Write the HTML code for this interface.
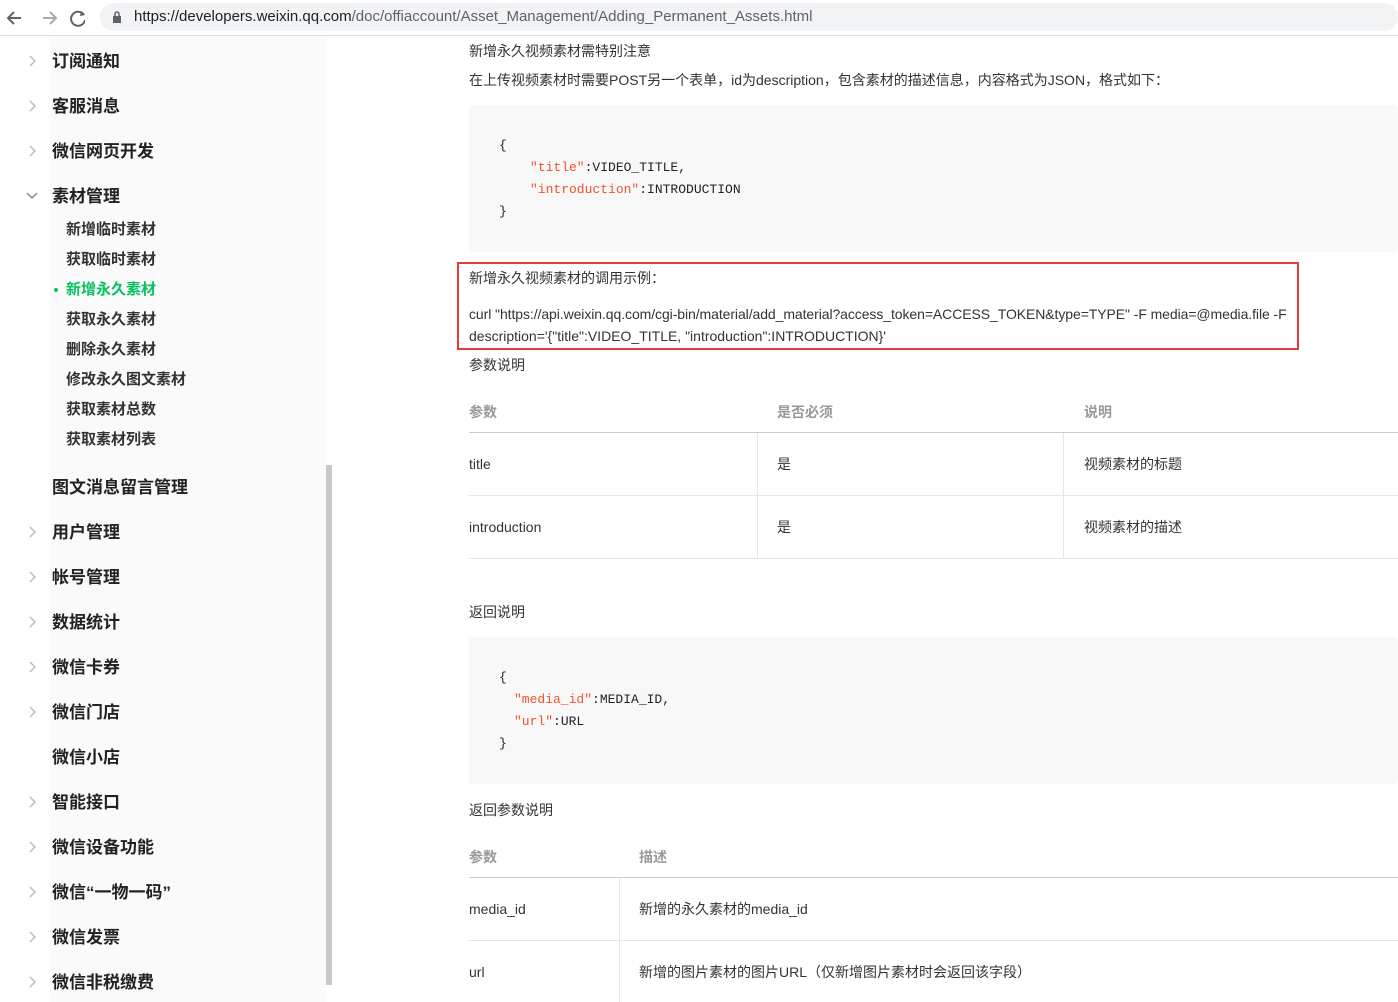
<!DOCTYPE html>
<html><head><meta charset="utf-8"><style>
*{margin:0;padding:0;box-sizing:border-box}
body{width:1398px;height:1002px;overflow:hidden;background:#fff;font-family:"Liberation Sans","Noto Sans CJK SC",sans-serif;color:#333;position:relative}
.bar{position:absolute;left:0;top:0;width:1398px;height:36px;background:#fff;border-bottom:1px solid #ddd}
.url{position:absolute;left:100px;top:3px;width:1298px;height:28px;background:#f1f3f4;border-radius:14px;font-size:15px;color:#202124;line-height:28px;padding-left:34px}
.url span{color:#5f6368}
.side{position:absolute;left:50px;top:37px;width:276px;height:965px;background:#fafafa}
.scroll{position:absolute;left:326px;top:465px;width:6px;height:520px;background:#c8c8c8}
.t{position:absolute;left:52px;font-size:17px;color:#222;font-weight:bold;line-height:20px}
.s{position:absolute;left:66px;font-size:15px;color:#333;font-weight:bold;line-height:18px}
.ar{position:absolute;left:28px;width:8px;height:12px}
.c{position:absolute;left:469px;font-size:14px;color:#333;line-height:18px;white-space:nowrap}
.code{position:absolute;left:469px;width:929px;background:#f8f8f8;border-radius:4px;font-family:"Liberation Mono",monospace;font-size:13px;color:#222}
.code div{position:absolute;white-space:pre}
.k{color:#f0522e}
.hr{position:absolute;left:469px;width:929px;height:1px;background:#e6e6e6}
.vr{position:absolute;width:1px;background:#e6e6e6}
.th{position:absolute;font-size:14px;color:#999;font-weight:bold}
</style></head><body>
<div class="bar">
<svg style="position:absolute;left:5px;top:8px" width="80" height="20"><path d="M16 10H4M9 4L3 10l6 6" stroke="#5f6368" stroke-width="2" fill="none"/><path d="M38 10h12M45 4l6 6-6 6" stroke="#aaa" stroke-width="2" fill="none"/><path d="M79 7a7 7 0 1 0 1 5" stroke="#5f6368" stroke-width="2" fill="none"/><path d="M76 3l4 4-5 1z" fill="#5f6368"/></svg>
<div class="url"><svg style="position:absolute;left:12px;top:8px" width="10" height="12"><rect x="1" y="5" width="8" height="7" fill="#5f6368"/><path d="M3 5V3a2 2 0 0 1 4 0v2" stroke="#5f6368" stroke-width="1.5" fill="none"/></svg>https://developers.weixin.qq.com<span>/doc/offiaccount/Asset_Management/Adding_Permanent_Assets.html</span></div>
</div>
<div class="side"></div><div class="scroll"></div>
<svg width="0" height="0" style="position:absolute"><defs><path id="chev" d="M2 1l5 5-5 5" stroke="#bbb" stroke-width="1.5" fill="none"/></defs></svg>
<svg class="ar" style="top:55px"><use href="#chev"/></svg><div class="t" style="top:52px">订阅通知</div>
<svg class="ar" style="top:100px"><use href="#chev"/></svg><div class="t" style="top:97px">客服消息</div>
<svg class="ar" style="top:145px"><use href="#chev"/></svg><div class="t" style="top:142px">微信网页开发</div>
<svg style="position:absolute;left:26px;top:192px" width="12" height="8"><path d="M1 1l5 5 5-5" stroke="#888" stroke-width="1.5" fill="none"/></svg><div class="t" style="top:187px">素材管理</div>
<div class="s" style="top:221px">新增临时素材</div>
<div class="s" style="top:251px">获取临时素材</div>
<div class="s" style="top:281px;color:#07c160">新增永久素材</div><div style="position:absolute;left:54px;top:288px;width:4px;height:4px;border-radius:2px;background:#07c160"></div>
<div class="s" style="top:311px">获取永久素材</div>
<div class="s" style="top:341px">删除永久素材</div>
<div class="s" style="top:371px">修改永久图文素材</div>
<div class="s" style="top:401px">获取素材总数</div>
<div class="s" style="top:431px">获取素材列表</div>
<div class="t" style="top:478px">图文消息留言管理</div>
<svg class="ar" style="top:526px"><use href="#chev"/></svg><div class="t" style="top:523px">用户管理</div>
<svg class="ar" style="top:571px"><use href="#chev"/></svg><div class="t" style="top:568px">帐号管理</div>
<svg class="ar" style="top:616px"><use href="#chev"/></svg><div class="t" style="top:613px">数据统计</div>
<svg class="ar" style="top:661px"><use href="#chev"/></svg><div class="t" style="top:658px">微信卡券</div>
<svg class="ar" style="top:706px"><use href="#chev"/></svg><div class="t" style="top:703px">微信门店</div>
<div class="t" style="top:748px">微信小店</div>
<svg class="ar" style="top:796px"><use href="#chev"/></svg><div class="t" style="top:793px">智能接口</div>
<svg class="ar" style="top:841px"><use href="#chev"/></svg><div class="t" style="top:838px">微信设备功能</div>
<svg class="ar" style="top:886px"><use href="#chev"/></svg><div class="t" style="top:883px">微信“一物一码”</div>
<svg class="ar" style="top:931px"><use href="#chev"/></svg><div class="t" style="top:928px">微信发票</div>
<svg class="ar" style="top:976px"><use href="#chev"/></svg><div class="t" style="top:973px">微信非税缴费</div>

<div class="c" style="top:42px">新增永久视频素材需特别注意</div>
<div class="c" style="top:71px">在上传视频素材时需要POST另一个表单，id为description，包含素材的描述信息，内容格式为JSON，格式如下：</div>
<div class="code" style="top:105px;height:147px">
<div style="left:30px;top:33px">{</div>
<div style="left:61px;top:55px"><span class="k">"title"</span>:VIDEO_TITLE,</div>
<div style="left:61px;top:77px"><span class="k">"introduction"</span>:INTRODUCTION</div>
<div style="left:30px;top:99px">}</div></div>
<div style="position:absolute;left:457px;top:262px;width:842px;height:88px;border:2px solid #e83a3a"></div>
<div class="c" style="top:269px">新增永久视频素材的调用示例：</div>
<div class="c" style="top:305px;letter-spacing:-0.08px">curl "https://api.weixin.qq.com/cgi-bin/material/add_material?access_token=ACCESS_TOKEN&amp;type=TYPE" -F media=@media.file -F</div>
<div class="c" style="top:327px">description='{"title":VIDEO_TITLE, "introduction":INTRODUCTION}'</div>
<div class="c" style="top:356px">参数说明</div>
<div class="th" style="left:469px;top:402px">参数</div><div class="th" style="left:777px;top:402px">是否必须</div><div class="th" style="left:1084px;top:402px">说明</div>
<div class="hr" style="top:432px;background:#ccc"></div>
<div class="c" style="top:455px">title</div><div class="c" style="left:777px;top:455px">是</div><div class="c" style="left:1084px;top:455px">视频素材的标题</div>
<div class="hr" style="top:495px"></div>
<div class="c" style="top:518px">introduction</div><div class="c" style="left:777px;top:518px">是</div><div class="c" style="left:1084px;top:518px">视频素材的描述</div>
<div class="hr" style="top:558px"></div>
<div class="vr" style="left:757px;top:433px;height:125px"></div><div class="vr" style="left:1063px;top:433px;height:125px"></div>
<div class="c" style="top:603px">返回说明</div>
<div class="code" style="top:637px;height:147px">
<div style="left:30px;top:33px">{</div>
<div style="left:45px;top:55px"><span class="k">"media_id"</span>:MEDIA_ID,</div>
<div style="left:45px;top:77px"><span class="k">"url"</span>:URL</div>
<div style="left:30px;top:99px">}</div></div>
<div class="c" style="top:801px">返回参数说明</div>
<div class="th" style="left:469px;top:847px">参数</div><div class="th" style="left:639px;top:847px">描述</div>
<div class="hr" style="top:877px;background:#ccc"></div>
<div class="c" style="top:900px">media_id</div><div class="c" style="left:639px;top:900px">新增的永久素材的media_id</div>
<div class="hr" style="top:940px"></div>
<div class="c" style="top:963px">url</div><div class="c" style="left:639px;top:963px">新增的图片素材的图片URL（仅新增图片素材时会返回该字段）</div>
<div class="vr" style="left:619px;top:878px;height:124px"></div>
</body></html>
